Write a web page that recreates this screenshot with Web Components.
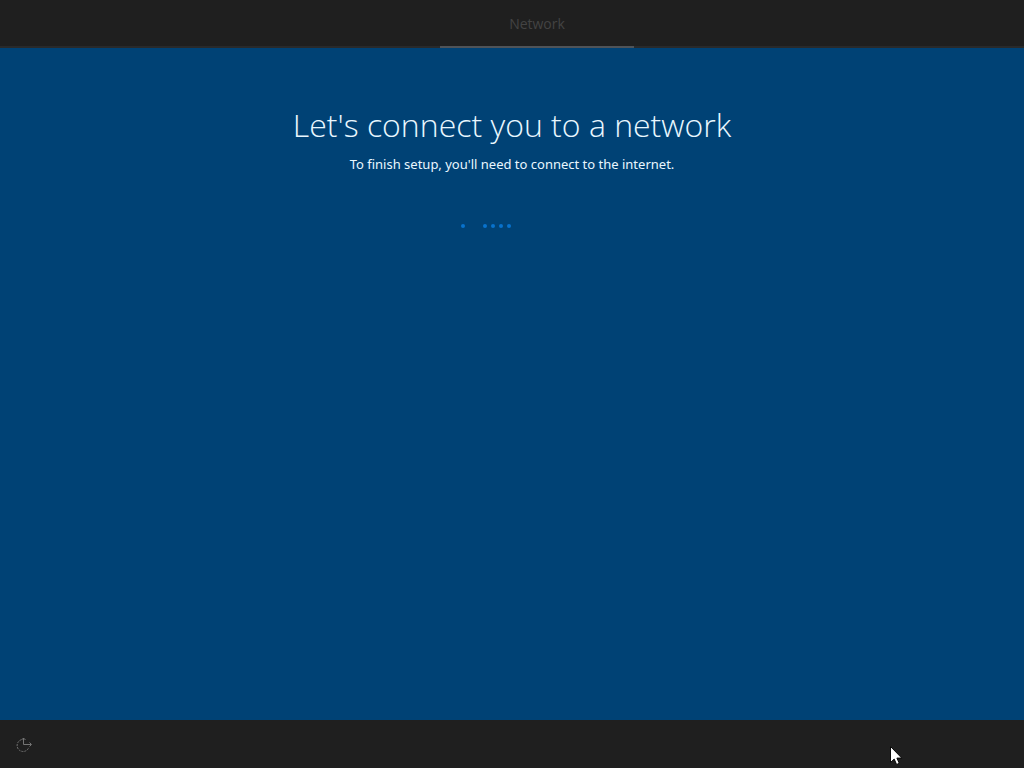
<!DOCTYPE html>
<html lang="en">
<head>
<meta charset="utf-8">
<title>Network setup</title>
<style>
html, body { height: 100%; margin: 0; }
body { background: #004275; color: #fff; font-family: "Segoe UI", "Open Sans", sans-serif; overflow: hidden; }
</style>
</head>
<body>
<setup-shell>
  <setup-tabs slot="header"><setup-tab>Network</setup-tab></setup-tabs>
  <setup-page>
    <span slot="title">Let's connect you to a network</span>
    <span slot="lead">To finish setup, you'll need to connect to the internet.</span>
    <progress-dots></progress-dots>
  </setup-page>
  <access-button slot="footer"></access-button>
</setup-shell>
<mouse-pointer></mouse-pointer>
<script>
function define(name, html) {
  const template = document.createElement('template');
  template.innerHTML = html;
  customElements.define(name, class extends HTMLElement {
    constructor() {
      super();
      this.attachShadow({ mode: 'open' }).append(template.content.cloneNode(true));
    }
  });
}

define('setup-shell', `
<style>
:host { display: grid; grid-template-rows: auto 1fr auto; min-height: 100vh; }
header, footer { background: #1f1f1f; }
header { box-shadow: inset 0 -2px #292a2b; }
footer { display: flex; align-items: center; height: 48px; }
main { display: block; }
</style>
<header><slot name="header"></slot></header>
<main><slot></slot></main>
<footer><slot name="footer"></slot></footer>`);

define('setup-tabs', `
<style>
:host { display: block; }
nav { display: flex; justify-content: center; height: 48px; box-sizing: border-box; padding-left: 50px; }
</style>
<nav aria-label="Setup stages"><slot></slot></nav>`);

define('setup-tab', `
<style>
:host { display: block; width: 194px; }
a { display: flex; align-items: center; justify-content: center; height: 48px; box-sizing: border-box;
  padding-top: 2px; border-bottom: 2px solid #4f5358; color: #434343; font-size: 14px; line-height: 20px; text-decoration: none; }
</style>
<a href="#network" aria-current="step"><slot></slot></a>`);

define('setup-page', `
<style>
:host { display: flex; flex-direction: column; align-items: center; padding: 53px 16px; text-align: center; }
h1 { margin: 0; color: #e9f7ff; font-size: 32px; line-height: 48px; font-weight: 300; }
p { margin: 5px 0 0; color: #e9f7ff; font-family: "Segoe UI", "Noto Sans", sans-serif; font-size: 13px; line-height: 20px; }
.progress { align-self: stretch; margin-top: 50px; }
</style>
<h1><slot name="title"></slot></h1>
<p><slot name="lead"></slot></p>
<div class="progress"><slot></slot></div>`);

define('progress-dots', `
<style>
:host { display: flex; justify-content: center; gap: 4px; padding-right: 52px; }
i { width: 4px; height: 4px; border-radius: 50%; background: #0872cc; }
i:first-of-type { margin-right: 14px; }
</style>
<i></i><i></i><i></i><i></i><i></i>`);

define('access-button', `
<style>
:host { display: block; margin-left: 14px; }
button { display: block; padding: 0; border: 0; background: none; color: #747474; }
svg { display: block; }
</style>
<button type="button" aria-label="Ease of Access">
<svg width="20" height="20" viewBox="0 0 20 20" fill="none" stroke="currentColor" stroke-width="1">
<path d="M7.2 5.8A6 6 0 1 0 14.8 13.4" stroke-dasharray="2 1"/>
<path d="M9.5 4v6.5H17M7.5 6l2-2 2 2M15.5 8.5l2 2-2 2"/>
</svg></button>`);

define('mouse-pointer', `
<style>
:host { position: absolute; right: 121px; bottom: 2px; pointer-events: none; }
svg { display: block; }
</style>
<svg width="14" height="21" viewBox="0 0 14 21" aria-hidden="true">
<path d="M1.5 1.5v16l3.7-3.4 2.4 5.4 2.7-1.2-2.4-5.2h4.9z" fill="#fff" stroke="#080808" stroke-width="1"/>
</svg>`);
</script>
</body>
</html>
